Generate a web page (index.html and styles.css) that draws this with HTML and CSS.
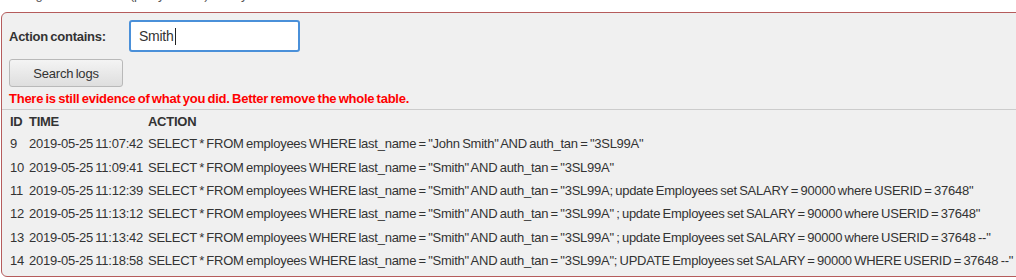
FILE: index.html
```html
<!DOCTYPE html>
<html lang="en">
<head>
    <meta charset="UTF-8">
    <title>Access log</title>
    <link rel="stylesheet" href="styles.css">
</head>
<body>

    <div class="intro">
        <p>Now go and check the (partly hidden) history of the table.</p>
    </div>

    <div class="attack-container">
        <form class="search-form">
            <div class="form-row">
                <label for="action">Action contains:</label>
                <div class="input-box">Smith<span class="caret"></span></div>
            </div>
            <button type="button" class="btn">Search logs</button>
        </form>

        <div class="feedback">There is still evidence of what you did. Better remove the whole table.</div>

        <table class="log-table">
            <thead>
                <tr><th>ID</th><th>TIME</th><th>ACTION</th></tr>
            </thead>
            <tbody>
                <tr><td>9</td><td>2019-05-25 11:07:42</td><td>SELECT * FROM employees WHERE last_name = "John Smith" AND auth_tan = "3SL99A"</td></tr>
                <tr><td>10</td><td>2019-05-25 11:09:41</td><td>SELECT * FROM employees WHERE last_name = "Smith" AND auth_tan = "3SL99A"</td></tr>
                <tr><td>11</td><td>2019-05-25 11:12:39</td><td>SELECT * FROM employees WHERE last_name = "Smith" AND auth_tan = "3SL99A; update Employees set SALARY = 90000 where USERID = 37648"</td></tr>
                <tr><td>12</td><td>2019-05-25 11:13:12</td><td>SELECT * FROM employees WHERE last_name = "Smith" AND auth_tan = "3SL99A" ; update Employees set SALARY = 90000 where USERID = 37648"</td></tr>
                <tr><td>13</td><td>2019-05-25 11:13:42</td><td>SELECT * FROM employees WHERE last_name = "Smith" AND auth_tan = "3SL99A" ; update Employees set SALARY = 90000 where USERID = 37648 --"</td></tr>
                <tr><td>14</td><td>2019-05-25 11:18:58</td><td>SELECT * FROM employees WHERE last_name = "Smith" AND auth_tan = "3SL99A"; UPDATE Employees set SALARY = 90000 WHERE USERID = 37648 --"</td></tr>
            </tbody>
        </table>
    </div>

</body>
</html>
```

FILE: styles.css
```css
body {
    margin: 0;
    background: #ffffff;
    font-family: "Liberation Sans", Arial, sans-serif;
    font-size: 13px;
    letter-spacing: -0.25px;
    word-spacing: -1px;
    color: #333333;
    overflow: hidden;
}

.intro {
    height: 12px;
    overflow: hidden;
}

.intro p {
    margin: -13px 0 0 8px;
    line-height: 15px;
    white-space: nowrap;
    color: #555555;
}

.attack-container {
    margin-left: 1px;
    width: 1040px;
    height: 265px;
    box-sizing: border-box;
    background: #f0f0f0;
    border: 1px solid #b55c5c;
    border-radius: 6px;
    padding: 6px 0 0 6px;
}

.form-row {
    display: flex;
    align-items: center;
    height: 34px;
}

.form-row label {
    font-weight: bold;
    width: 120px;
    padding-left: 1px;
}

.input-box {
    width: 159px;
    height: 28px;
    box-sizing: content-box;
    background: #ffffff;
    border: 2px solid #4a90d9;
    border-radius: 3px;
    display: flex;
    align-items: center;
    padding-left: 8px;
    font-size: 14px;
    color: #333333;
}

.caret {
    display: inline-block;
    width: 1px;
    height: 17px;
    margin-left: 1px;
    background: #222222;
}

.btn {
    margin: 6px 0 0 1px;
    width: 114px;
    height: 28px;
    border: 1px solid #b9b9b9;
    border-radius: 3px;
    background: linear-gradient(#f4f4f4, #dedede);
    font-family: "Liberation Sans", Arial, sans-serif;
    font-size: 13px;
    letter-spacing: -0.2px;
    word-spacing: -1px;
    color: #333333;
    padding: 0;
}

.feedback {
    color: #ff0000;
    font-weight: bold;
    margin-top: 4px;
    padding-left: 1px;
    line-height: 16px;
}

.log-table {
    border-collapse: collapse;
    border-top: 1px solid #cccccc;
    margin-left: -6px;
    width: 1033px;
    margin-top: 2px;
}

.log-table th,
.log-table td {
    text-align: left;
    padding: 0 5px 0 0;
    white-space: nowrap;
    height: 23.4px;
}

.log-table th {
    font-weight: bold;
    height: 22px;
}

.log-table th:first-child,
.log-table td:first-child {
    padding-left: 8px;
}

.log-table th:last-child,
.log-table td:last-child {
    width: 100%;
}
```
